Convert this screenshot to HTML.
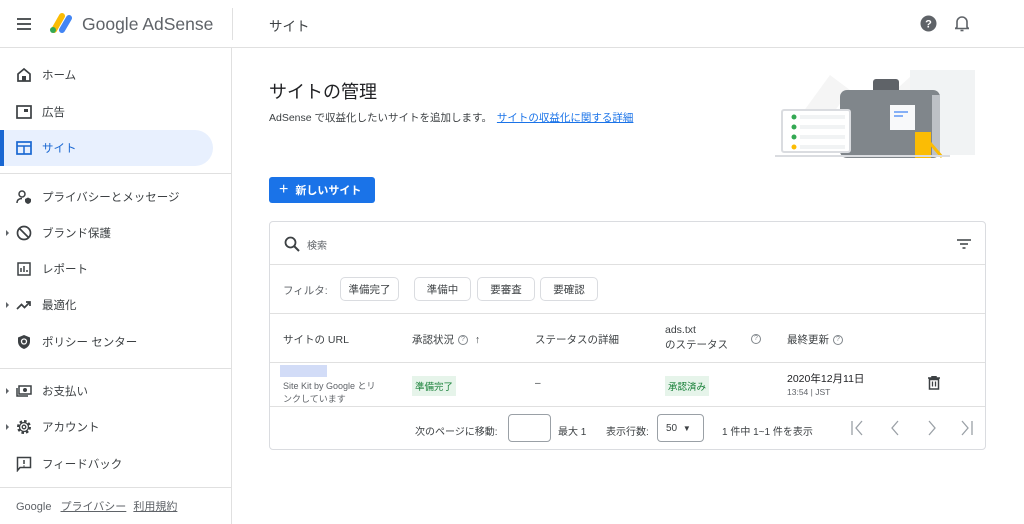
<!DOCTYPE html>
<html><head><meta charset="utf-8"><style>
*{box-sizing:border-box;margin:0;padding:0}
body{width:1024px;height:524px;overflow:hidden;background:#fff;font-family:"Liberation Sans","Noto Sans CJK JP",sans-serif;color:#3c4043;position:relative}
.abs{position:absolute}
.top{left:0;top:0;width:1024px;height:48px;border-bottom:1px solid #e0e0e0}
.side{left:0;top:48px;width:232px;height:476px;border-right:1px solid #e0e0e0}
.item{position:absolute;left:0;width:213px;height:36px;display:flex;align-items:center;font-size:11.5px;color:#3c4043}
.item .ic{position:absolute;left:16px;width:16px;height:16px}
.item span{position:absolute;left:42px}
.tri{position:absolute;left:6px;width:0;height:0;border-top:3px solid transparent;border-bottom:3px solid transparent;border-left:3px solid #5f6368}
.hr{position:absolute;left:0;width:232px;height:1px;background:#e0e0e0}
.card{left:269px;top:221px;width:717px;height:229px;border:1px solid #dadce0;border-radius:4px}
.chip{position:absolute;top:55px;height:24px;border:1px solid #dadce0;border-radius:5px;font-size:10.5px;display:flex;align-items:center;justify-content:center;color:#3c4043}
.th{position:absolute;font-size:10.5px;color:#3c4043}
.q{display:inline-block;width:10px;height:10px;border:1px solid #80868b;border-radius:50%;font-size:7px;line-height:8px;text-align:center;color:#80868b;vertical-align:middle;margin-left:4px}
.badge{position:absolute;background:#e6f4ea;color:#188038;font-size:9.5px;padding:3px 3px}
</style></head><body>
<div class="abs top">
 <svg class="abs" style="left:16px;top:17px" width="16" height="14"><path d="M1 2h14M1 7h14M1 12h14" stroke="#3c4043" stroke-width="1.8"/></svg>
 <svg class="abs" style="left:48px;top:12px" width="26" height="22"><path d="M6 18 L14 4" stroke="#fbbc04" stroke-width="6" stroke-linecap="round"/><path d="M14 18 L21 6" stroke="#4285f4" stroke-width="6" stroke-linecap="round"/><circle cx="5" cy="18" r="3" fill="#34a853"/></svg>
 <div class="abs" style="left:82px;top:14px;font-size:17.5px;color:#5f6368">Google AdSense</div>
 <div class="abs" style="left:232px;top:8px;width:1px;height:32px;background:#e0e0e0"></div>
 <div class="abs" style="left:269px;top:15px;font-size:13.5px;color:#3c4043">サイト</div>
 <svg class="abs" style="left:920px;top:15px" width="17" height="17"><circle cx="8.5" cy="8.5" r="8" fill="#5f6368"/><text x="8.5" y="12.5" font-size="11" font-weight="bold" fill="#fff" text-anchor="middle" font-family="Liberation Sans">?</text></svg>
 <svg class="abs" style="left:955px;top:15px" width="14" height="17"><path d="M2 12V7a5 5 0 0 1 10 0v5l1.5 1.5h-13z" fill="none" stroke="#5f6368" stroke-width="1.6"/><path d="M5.5 15.5h3" stroke="#5f6368" stroke-width="1.6"/></svg>
</div>
<div class="abs side">
 <div class="item" style="top:9px"><svg class="ic" viewBox="0 0 16 16"><path d="M2 7L8 2l6 5v7H2z" fill="none" stroke="#3c4043" stroke-width="1.7"/><rect x="6" y="9" width="4" height="5" fill="#3c4043"/></svg><span>ホーム</span></div>
 <div class="item" style="top:46px"><svg class="ic" viewBox="0 0 16 16"><rect x="1" y="2" width="14" height="12" fill="none" stroke="#3c4043" stroke-width="1.7"/><rect x="8" y="5" width="4" height="3" fill="#3c4043"/></svg><span>広告</span></div>
 <div class="item" style="top:82px;background:#e8f0fe;border-radius:0 18px 18px 0;color:#1967d2"><div style="position:absolute;left:0;top:0;width:4px;height:36px;background:#1967d2"></div><svg class="ic" viewBox="0 0 16 16"><rect x="1" y="2" width="14" height="12" fill="none" stroke="#1967d2" stroke-width="1.7"/><path d="M1 6h14M8 6v8" stroke="#1967d2" stroke-width="1.5"/></svg><span>サイト</span></div>
 <div class="hr" style="top:125px"></div>
 <div class="item" style="top:131px"><svg class="ic" viewBox="0 0 16 16"><circle cx="6" cy="5" r="3" fill="none" stroke="#3c4043" stroke-width="1.5"/><path d="M1 14c0-3 2-4.5 5-4.5" fill="none" stroke="#3c4043" stroke-width="1.5"/><path d="M9 10l3-1.5 3 1.5v2c0 1.5-1.5 2.5-3 3-1.5-.5-3-1.5-3-3z" fill="#3c4043"/></svg><span>プライバシーとメッセージ</span></div>
 <div class="item" style="top:167px"><div class="tri"></div><svg class="ic" viewBox="0 0 16 16"><circle cx="8" cy="8" r="6.5" fill="none" stroke="#3c4043" stroke-width="1.7"/><path d="M3.5 3.5l9 9" stroke="#3c4043" stroke-width="1.7"/></svg><span>ブランド保護</span></div>
 <div class="item" style="top:203px"><svg class="ic" viewBox="0 0 16 16"><rect x="2" y="2" width="12" height="12" fill="none" stroke="#3c4043" stroke-width="1.5"/><path d="M5 11V7M8 11V5M11 11V9" stroke="#3c4043" stroke-width="1.5"/></svg><span>レポート</span></div>
 <div class="item" style="top:239px"><div class="tri"></div><svg class="ic" viewBox="0 0 16 16"><path d="M1 12l4.5-4.5 3 3L14 5M10 5h4v4" fill="none" stroke="#3c4043" stroke-width="1.7"/></svg><span>最適化</span></div>
 <div class="item" style="top:276px"><svg class="ic" viewBox="0 0 16 16"><path d="M8 1l6 2.5v4c0 4-3 6.5-6 7.5-3-1-6-3.5-6-7.5v-4z" fill="#3c4043"/><circle cx="8" cy="7.5" r="2.5" fill="none" stroke="#fff" stroke-width="1.3"/></svg><span>ポリシー センター</span></div>
 <div class="hr" style="top:320px"></div>
 <div class="item" style="top:325px"><div class="tri"></div><svg class="ic" viewBox="0 0 16 16"><rect x="3" y="3" width="12" height="8" fill="none" stroke="#3c4043" stroke-width="1.5"/><circle cx="9" cy="7" r="2" fill="#3c4043"/><path d="M1 5v8h11" fill="none" stroke="#3c4043" stroke-width="1.5"/></svg><span>お支払い</span></div>
 <div class="item" style="top:361px"><div class="tri"></div><svg class="ic" viewBox="0 0 16 16"><circle cx="8" cy="8" r="5.5" fill="none" stroke="#3c4043" stroke-width="3" stroke-dasharray="2.4 1.9"/><circle cx="8" cy="8" r="4.5" fill="none" stroke="#3c4043" stroke-width="1.3"/><circle cx="8" cy="8" r="1.8" fill="none" stroke="#3c4043" stroke-width="1.3"/></svg><span>アカウント</span></div>
 <div class="item" style="top:398px"><svg class="ic" viewBox="0 0 16 16"><path d="M1.5 1.5h13v10H4l-2.5 3z" fill="none" stroke="#3c4043" stroke-width="1.5"/><path d="M8 4v4M8 9.5v1" stroke="#3c4043" stroke-width="1.5"/></svg><span>フィードバック</span></div>
 <div class="hr" style="top:439px"></div>
 <div class="abs" style="left:16px;top:450px;font-size:11px;color:#5f6368">Google <u style="margin-left:6px">プライバシー</u> <u style="margin-left:4px">利用規約</u></div>
</div>
<div class="abs" style="left:269px;top:78px;font-size:18px;color:#202124">サイトの管理</div>
<div class="abs" style="left:269px;top:110px;font-size:10.5px;color:#3c4043">AdSense で収益化したいサイトを追加します。 <u style="color:#1a73e8;margin-left:2px">サイトの収益化に関する詳細</u></div>
<div class="abs" style="left:269px;top:177px;width:106px;height:26px;background:#1a73e8;border-radius:3px;color:#fff;font-size:11px;font-weight:bold;display:flex;align-items:center;padding-left:10px"><span style="font-size:16px;font-weight:normal;margin-right:7px">+</span>新しいサイト</div>
<svg class="abs" style="left:770px;top:65px" width="220" height="95">
 <path d="M20 65L60 10 80 25 40 80z M120 30l20-18 20 18z" fill="#f5f5f5"/>
 <rect x="140" y="5" width="65" height="85" fill="#f1f3f4"/>
 <rect x="103" y="14" width="26" height="14" rx="3" fill="#5f6368"/>
 <rect x="70" y="25" width="100" height="68" rx="7" fill="#80868b"/>
 <rect x="162" y="30" width="8" height="60" fill="#bdc1c6"/>
 <rect x="120" y="40" width="25" height="25" fill="#f8f9fa"/>
 <path d="M124 47h14M124 51h9" stroke="#4285f4" stroke-width="1.3"/>
 <rect x="12" y="45" width="68" height="42" rx="2" fill="#fff" stroke="#dadce0" stroke-width="2"/>
 <g fill="#34a853"><circle cx="24" cy="52" r="2.5"/><circle cx="24" cy="62" r="2.5"/><circle cx="24" cy="72" r="2.5"/></g><circle cx="24" cy="82" r="2.5" fill="#fbbc04"/>
 <g fill="#f1f3f4"><rect x="30" y="50" width="45" height="4"/><rect x="30" y="60" width="45" height="4"/><rect x="30" y="70" width="45" height="4"/><rect x="30" y="80" width="45" height="4"/></g>
 <rect x="145" y="67" width="16" height="26" fill="#fbbc04"/>
 <path d="M160 78l12 14" stroke="#fbbc04" stroke-width="3"/>
 <rect x="5" y="90" width="175" height="2" fill="#dadce0"/>
</svg>
<div class="abs card">
 <svg class="abs" style="left:14px;top:14px" width="16" height="16"><circle cx="6.5" cy="6.5" r="5" fill="none" stroke="#3c4043" stroke-width="1.8"/><path d="M10 10l5 5" stroke="#3c4043" stroke-width="2"/></svg>
 <div class="abs" style="left:37px;top:15px;font-size:10px;color:#5f6368">検索</div>
 <svg class="abs" style="left:687px;top:17px" width="14" height="10"><path d="M0 1h14M3 5h8M5.5 9h3" stroke="#3c4043" stroke-width="1.5"/></svg>
 <div class="abs" style="left:0;top:42px;width:715px;height:1px;background:#e0e0e0"></div>
 <div class="abs" style="left:13px;top:61px;font-size:10.5px;color:#5f6368">フィルタ:</div>
 <div class="chip" style="left:70px;width:59px">準備完了</div>
 <div class="chip" style="left:144px;width:57px">準備中</div>
 <div class="chip" style="left:207px;width:58px">要審査</div>
 <div class="chip" style="left:270px;width:58px">要確認</div>
 <div class="abs" style="left:0;top:91px;width:715px;height:1px;background:#e0e0e0"></div>
 <div class="th" style="left:13px;top:110px">サイトの URL</div>
 <div class="th" style="left:142px;top:110px">承認状況<span class="q">?</span> <span style="margin-left:4px">↑</span></div>
 <div class="th" style="left:265px;top:110px">ステータスの詳細</div>
 <div class="th" style="left:395px;top:101px;line-height:15px">ads.txt<br>のステータス</div>
 <span class="q abs" style="left:481px;top:112px;margin:0">?</span>
 <div class="th" style="left:517px;top:110px">最終更新<span class="q">?</span></div>
 <div class="abs" style="left:0;top:140px;width:715px;height:1px;background:#e0e0e0"></div>
 <div class="abs" style="left:10px;top:143px;width:47px;height:12px;background:#d2dcf7"></div>
 <div class="abs" style="left:13px;top:158px;font-size:9px;color:#5f6368;line-height:13px">Site Kit by Google とリ<br>ンクしています</div>
 <div class="badge" style="left:142px;top:154px">準備完了</div>
 <div class="abs" style="left:265px;top:156px;font-size:10px">–</div>
 <div class="badge" style="left:395px;top:154px">承認済み</div>
 <div class="abs" style="left:517px;top:149px;font-size:10.5px;color:#202124">2020年12月11日</div>
 <div class="abs" style="left:517px;top:165px;font-size:8.5px;color:#5f6368">13:54 | JST</div>
 <svg class="abs" style="left:658px;top:154px" width="12" height="14"><path d="M0 2h12M4 2V0.5h4V2M1.5 3.5h9V13h-9z" fill="none" stroke="#3c4043" stroke-width="1.5"/><path d="M4.5 5.5v5M7.5 5.5v5" stroke="#3c4043" stroke-width="1.3"/></svg>
 <div class="abs" style="left:0;top:184px;width:715px;height:1px;background:#e0e0e0"></div>
 <div class="abs" style="left:145px;top:201px;font-size:10px">次のページに移動:</div>
 <div class="abs" style="left:238px;top:192px;width:43px;height:28px;border:1px solid #9aa0a6;border-radius:4px"></div>
 <div class="abs" style="left:288px;top:201px;font-size:10px">最大 1</div>
 <div class="abs" style="left:336px;top:201px;font-size:10px">表示行数:</div>
 <div class="abs" style="left:387px;top:192px;width:47px;height:28px;border:1px solid #9aa0a6;border-radius:4px;font-size:10px;padding:8px 8px">50 <span style="font-size:8px;margin-left:3px">▼</span></div>
 <div class="abs" style="left:452px;top:201px;font-size:10px">1 件中 1~1 件を表示</div>
 <svg class="abs" style="left:578px;top:198px" width="130" height="16"><g fill="none" stroke="#9aa0a6" stroke-width="1.3"><path d="M4 1v14M14 1L8 8l6 7"/><path d="M50 1l-6 7 6 7"/><path d="M81 1l6 7-6 7"/><path d="M124 1v14M114 1l6 7-6 7"/></g></svg>
</div>
</body></html>
